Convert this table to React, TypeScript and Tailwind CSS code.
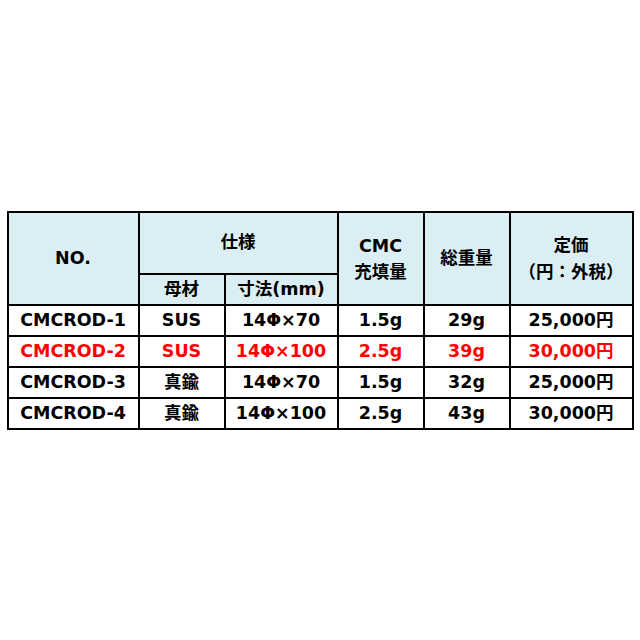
import React from "react";

const rows = [
  { no: "CMCROD-1", mat: "SUS", size: "14Φ×70", cmc: "1.5g", weight: "29g", price: "25,000円", red: false },
  { no: "CMCROD-2", mat: "SUS", size: "14Φ×100", cmc: "2.5g", weight: "39g", price: "30,000円", red: true },
  { no: "CMCROD-3", mat: "真鍮", size: "14Φ×70", cmc: "1.5g", weight: "32g", price: "25,000円", red: false },
  { no: "CMCROD-4", mat: "真鍮", size: "14Φ×100", cmc: "2.5g", weight: "43g", price: "30,000円", red: false },
];

const th = "border-2 border-black bg-[#daeef3] text-center align-middle p-0";
const td = "border-2 border-black text-center align-middle p-0 h-[31px]";

export default function App() {
  return (
    <div className="w-[640px] h-[640px] bg-white flex items-center justify-center font-['DejaVu_Sans','Noto_Sans_CJK_JP',sans-serif] font-bold text-[17.5px] text-black leading-tight">
      <table className="border-collapse table-fixed w-[625px] mt-[1px]">
        <colgroup>
          <col className="w-[131px]" />
          <col className="w-[86px]" />
          <col className="w-[113px]" />
          <col className="w-[86px]" />
          <col className="w-[86px]" />
          <col className="w-[123px]" />
        </colgroup>
        <thead>
          <tr className="h-[62px]">
            <th rowSpan={2} className={th}>NO.</th>
            <th colSpan={2} className={th}>仕様</th>
            <th rowSpan={2} className={`${th} leading-[26px]`}>
              <div>CMC</div>
              <div>充填量</div>
            </th>
            <th rowSpan={2} className={th}>総重量</th>
            <th rowSpan={2} className={`${th} leading-[27px]`}>
              <div>定価</div>
              <div>（円：外税）</div>
            </th>
          </tr>
          <tr className="h-[31px]">
            <th className={th}>母材</th>
            <th className={th}>寸法(mm)</th>
          </tr>
        </thead>
        <tbody>
          {rows.map((r) => (
            <tr key={r.no} className={r.red ? "text-[#ff0000]" : ""}>
              <td className={td}>{r.no}</td>
              <td className={td}>{r.mat}</td>
              <td className={td}>{r.size}</td>
              <td className={td}>{r.cmc}</td>
              <td className={td}>{r.weight}</td>
              <td className={td}>{r.price}</td>
            </tr>
          ))}
        </tbody>
      </table>
    </div>
  );
}
